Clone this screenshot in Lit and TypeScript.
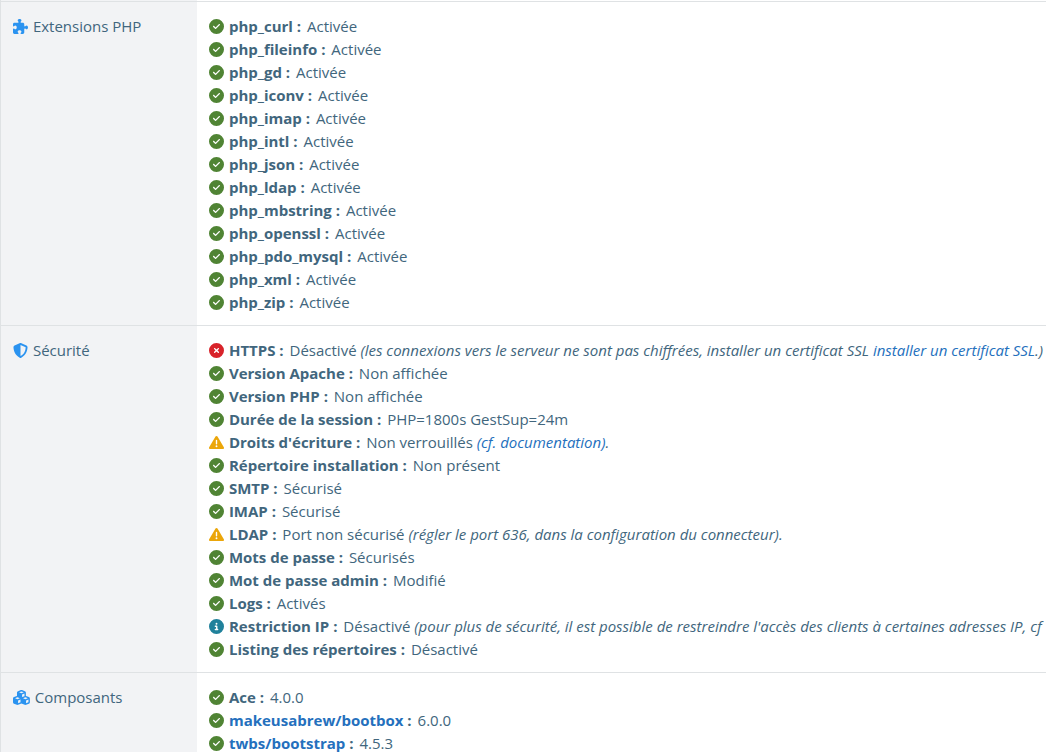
import { LitElement, html, css, svg, nothing } from "lit";
import type { TemplateResult } from "lit";
import { customElement, property } from "lit/decorators.js";

type Glyph = "puzzle" | "shield" | "cubes" | "ok" | "error" | "warning" | "info";

const DISC = "M256 512A256 256 0 1 0 256 0a256 256 0 1 0 0 512z";

const GLYPHS: Record<Glyph, { width: number; path: string }> = {
  puzzle: {
    width: 512,
    path: "M192 104.8c0-9.2-5.8-17.3-13.2-22.8C167.2 73.3 160 61.3 160 48c0-26.5 28.7-48 64-48s64 21.5 64 48c0 13.3-7.2 25.3-18.8 34c-7.4 5.5-13.2 13.6-13.2 22.8v0c0 12.8 10.4 23.2 23.2 23.2H336c26.5 0 48 21.5 48 48v56.8c0 12.8 10.4 23.2 23.2 23.2v0c9.2 0 17.3-5.8 22.8-13.2c8.7-11.6 20.7-18.8 34-18.8c26.5 0 48 28.7 48 64s-21.5 64-48 64c-13.3 0-25.3-7.2-34-18.8c-5.5-7.4-13.6-13.2-22.8-13.2v0c-12.8 0-23.2 10.4-23.2 23.2V464c0 26.5-21.5 48-48 48H279.2c-12.8 0-23.2-10.4-23.2-23.2v0c0-9.2 5.8-17.3 13.2-22.8c11.6-8.7 18.8-20.7 18.8-34c0-26.5-28.7-48-64-48s-64 21.5-64 48c0 13.3 7.2 25.3 18.8 34c7.4 5.5 13.2 13.6 13.2 22.8v0c0 12.8-10.4 23.2-23.2 23.2H48c-26.5 0-48-21.5-48-48V343.2C0 330.4 10.4 320 23.2 320v0c9.2 0 17.3 5.8 22.8 13.2C54.7 344.8 66.7 352 80 352c26.5 0 48-28.7 48-64s-21.5-64-48-64c-13.3 0-25.3 7.2-34 18.8C40.5 250.2 32.4 256 23.2 256v0C10.4 256 0 245.6 0 232.8V176c0-26.5 21.5-48 48-48H168.8c12.8 0 23.2-10.4 23.2-23.2v0z",
  },
  shield: {
    width: 512,
    path: "M256 0c4.6 0 9.2 1 13.4 2.9L457.7 82.8c22 9.3 38.4 31 38.3 57.2c-.5 99.2-41.3 280.7-213.6 363.2c-16.7 8-36.1 8-52.8 0C57.3 420.7 16.5 239.2 16 140c-.1-26.2 16.3-47.9 38.3-57.2L242.7 2.9C246.8 1 251.4 0 256 0zm0 66.8V444.8C394 378 431.1 230.1 432 141.4L256 66.8l0 0z",
  },
  cubes: {
    width: 576,
    path: "M290.8 48.6l78.4 29.7L288 109.5 206.8 78.3l78.4-29.7c1.8-.7 3.8-.7 5.7 0zM136 92.5V204.7c-1.3 .4-2.6 .8-3.9 1.3l-96 36.4C14.4 250.6 0 271.5 0 294.7V413.9c0 22.2 13.1 42.3 33.5 51.3l96 42.2c14.4 6.3 30.7 6.3 45.1 0L288 457.5l113.5 49.9c14.4 6.3 30.7 6.3 45.1 0l96-42.2c20.3-8.9 33.5-29.1 33.5-51.3V294.7c0-23.3-14.4-44.1-36.1-52.4l-96-36.4c-1.3-.5-2.6-.9-3.9-1.3V92.5c0-23.3-14.4-44.1-36.1-52.4l-96-36.4c-12.8-4.8-26.9-4.8-39.7 0l-96 36.4C150.4 48.4 136 69.3 136 92.5zM392 210.6l-82.4 31.2V152.6L392 121v89.6zM154.8 250.9l78.4 29.7L152 311.7 70.8 280.6l78.4-29.7c1.8-.7 3.8-.7 5.7 0zm18.8 204.4V354.8L256 323.2v95.9l-82.4 36.2zM421.2 250.9c1.8-.7 3.8-.7 5.7 0l78.4 29.7L424 311.7l-81.2-31.1 78.4-29.7zM523.2 421.2l-77.6 34.1V354.8L528 323.2v90.7c0 3.2-1.9 6-4.8 7.3z",
  },
  ok: {
    width: 512,
    path: DISC + "M369 209L241 337c-9.4 9.4-24.6 9.4-33.9 0l-64-64c-9.4-9.4-9.4-24.6 0-33.9s24.6-9.4 33.9 0l47 47L335 175c9.4-9.4 24.6-9.4 33.9 0s9.4 24.6 0 33.9z",
  },
  error: {
    width: 512,
    path: DISC + "M175 175c9.4-9.4 24.6-9.4 33.9 0l47 47 47-47c9.4-9.4 24.6-9.4 33.9 0s9.4 24.6 0 33.9l-47 47 47 47c9.4 9.4 9.4 24.6 0 33.9s-24.6 9.4-33.9 0l-47-47-47 47c-9.4 9.4-24.6 9.4-33.9 0s-9.4-24.6 0-33.9l47-47-47-47c-9.4-9.4-9.4-24.6 0-33.9z",
  },
  warning: {
    width: 512,
    path: "M256 32c14.2 0 27.3 7.5 34.5 19.8l216 368c7.3 12.4 7.3 27.7 .2 40.1S486.3 480 472 480H40c-14.3 0-27.6-7.7-34.7-20.1s-7-27.8 .2-40.1l216-368C228.7 39.5 241.8 32 256 32zm0 128c-13.3 0-24 10.7-24 24V296c0 13.3 10.7 24 24 24s24-10.7 24-24V184c0-13.3-10.7-24-24-24zm32 224a32 32 0 1 0 -64 0 32 32 0 1 0 64 0z",
  },
  info: {
    width: 512,
    path: DISC + "M216 336h24V272H216c-13.3 0-24-10.7-24-24s10.7-24 24-24h48c13.3 0 24 10.7 24 24v88h8c13.3 0 24 10.7 24 24s-10.7 24-24 24H216c-13.3 0-24-10.7-24-24s10.7-24 24-24zm40-208a32 32 0 1 1 0 64 32 32 0 1 1 0-64z",
  },
};

interface Check {
  state: Glyph;
  name: string;
  value: string;
  link?: boolean;
  note?: TemplateResult;
}

interface Section {
  icon: Glyph;
  title: string;
  checks: Check[];
}

const ok = (name: string, value: string, link = false): Check => ({ state: "ok", name, value, link });

const EXTENSIONS = [
  "curl", "fileinfo", "gd", "iconv", "imap", "intl", "json",
  "ldap", "mbstring", "openssl", "pdo_mysql", "xml", "zip",
];

const SECTIONS: Section[] = [
  {
    icon: "puzzle",
    title: "Extensions PHP",
    checks: EXTENSIONS.map((name) => ok(`php_${name}`, "Activée")),
  },
  {
    icon: "shield",
    title: "Sécurité",
    checks: [
      {
        state: "error",
        name: "HTTPS",
        value: "Désactivé",
        note: html`(les connexions vers le serveur ne sont pas chiffrées, installer un certificat SSL <a href="#">installer un certificat SSL</a>.)`,
      },
      ok("Version Apache", "Non affichée"),
      ok("Version PHP", "Non affichée"),
      ok("Durée de la session", "PHP=1800s GestSup=24m"),
      {
        state: "warning",
        name: "Droits d'écriture",
        value: "Non verrouillés",
        note: html`<a href="#">(cf. documentation)</a>.`,
      },
      ok("Répertoire installation", "Non présent"),
      ok("SMTP", "Sécurisé"),
      ok("IMAP", "Sécurisé"),
      {
        state: "warning",
        name: "LDAP",
        value: "Port non sécurisé",
        note: html`(régler le port 636, dans la configuration du connecteur).`,
      },
      ok("Mots de passe", "Sécurisés"),
      ok("Mot de passe admin", "Modifié"),
      ok("Logs", "Activés"),
      {
        state: "info",
        name: "Restriction IP",
        value: "Désactivé",
        note: html`(pour plus de sécurité, il est possible de restreindre l'accès des clients à certaines adresses IP, cf`,
      },
      ok("Listing des répertoires", "Désactivé"),
    ],
  },
  {
    icon: "cubes",
    title: "Composants",
    checks: [
      ok("Ace", "4.0.0"),
      ok("makeusabrew/bootbox", "6.0.0", true),
      ok("twbs/bootstrap", "4.5.3", true),
    ],
  },
];

@customElement("status-icon")
export class StatusIcon extends LitElement {
  @property() name: Glyph = "ok";

  static styles = css`
    :host {
      display: inline-block;
      height: 15px;
      margin-right: 1px;
      line-height: 0;
      vertical-align: -2px;
      color: #2b93f0;
    }
    :host([name="ok"]) { color: #508434; }
    :host([name="error"]) { color: #d8232a; }
    :host([name="warning"]) { color: #eba60a; }
    :host([name="info"]) { color: #20819b; }
    .glyph {
      display: block;
      height: 15px;
      width: auto;
      fill: currentColor;
    }
  `;

  render() {
    const { width, path } = GLYPHS[this.name];
    return html`<svg class="glyph" viewBox="0 0 ${width} 512" aria-hidden="true">${svg`<path d=${path}></path>`}</svg>`;
  }
}

@customElement("app-root")
export class AppRoot extends LitElement {
  static styles = css`
    :host {
      display: block;
      height: 100vh;
      overflow: hidden;
      background: #fff;
      color: #41667d;
      font: 15px/23px "Open Sans", "Noto Sans", sans-serif;
    }
    .report {
      width: 100%;
      table-layout: fixed;
      border-spacing: 0;
      border-left: 1px solid #dfe2e4;
    }
    .title-col { width: 196px; }
    .title,
    .details {
      padding: 13px 12px 11px;
      border-top: 1px solid #dfe2e4;
      vertical-align: top;
      text-align: left;
      font-weight: 400;
      white-space: nowrap;
    }
    .lead .title,
    .lead .details {
      height: 1px;
      padding: 0;
      border: 0;
    }
    .title { background: #f2f3f5; }
    .checks {
      margin: 0;
      padding: 0;
      list-style: none;
    }
    .name {
      margin-right: 2px;
      font-weight: 700;
    }
    .note { font-style: italic; }
    a {
      color: #2470bd;
      text-decoration: none;
    }
    a:hover { text-decoration: underline; }
  `;

  private renderCheck(check: Check) {
    const name = check.link ? html`<a href="#">${check.name}</a>` : check.name;
    return html`<li><status-icon name=${check.state}></status-icon> <span class="name">${name} :</span> ${check.value}${check.note ? html` <span class="note">${check.note}</span>` : nothing}</li>`;
  }

  render() {
    return html`
      <table class="report">
        <colgroup><col class="title-col" /><col /></colgroup>
        <tbody>
          <tr class="lead"><td class="title"></td><td class="details"></td></tr>
          ${SECTIONS.map(
            (section) => html`
              <tr>
                <th class="title" scope="row"><status-icon name=${section.icon}></status-icon> ${section.title}</th>
                <td class="details"><ul class="checks">${section.checks.map((check) => this.renderCheck(check))}</ul></td>
              </tr>
            `,
          )}
        </tbody>
      </table>
    `;
  }
}
